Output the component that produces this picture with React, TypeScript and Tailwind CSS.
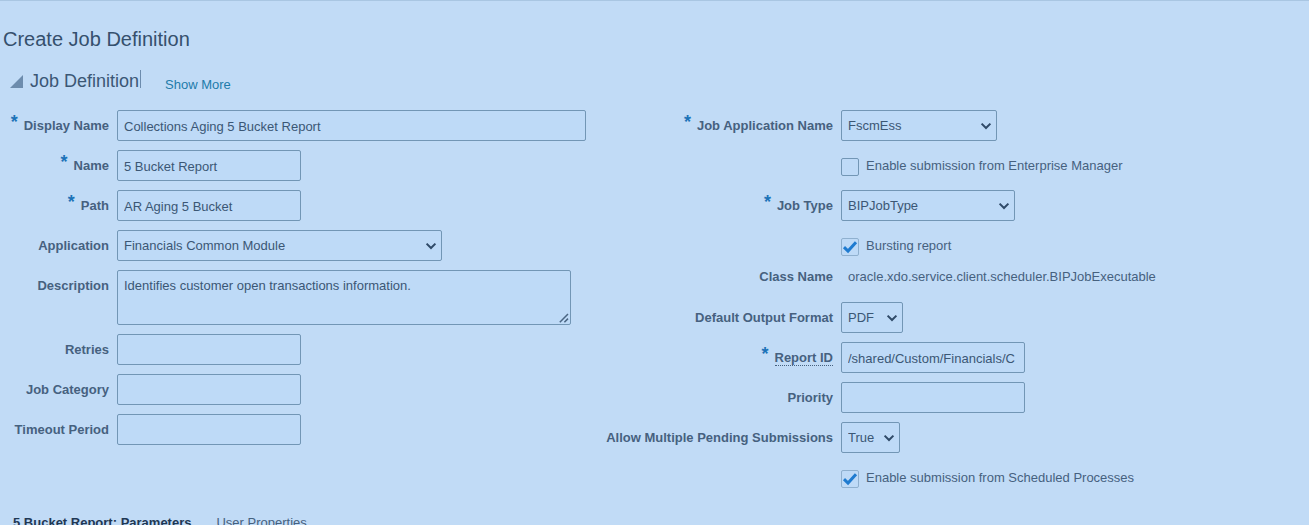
import React, { useId } from "react";

const control =
  "h-[31px] rounded-[2px] border border-[#7296b5] bg-[#bedaf7] px-[6px] text-[13px] text-[#3b5775] outline-none focus:border-[#1c73b8]";

function Label({ htmlFor, text, required, hint }: { htmlFor?: string; text: string; required?: boolean; hint?: boolean }) {
  return (
    <div className="flex h-[31px] items-center justify-end gap-[6px] whitespace-nowrap">
      {required && (
        <span aria-hidden="true" className="h-7 text-lg leading-5 font-bold text-[#1c73b8]">
          *
        </span>
      )}
      <label htmlFor={htmlFor} className="text-[13px] leading-4 font-bold text-[#46617f]">
        <span className={hint ? "border-b border-dotted border-[#46617f]" : ""}>{text}</span>
      </label>
    </div>
  );
}

type FieldProps = { label: string; value?: string; required?: boolean; hint?: boolean; width: string };

function TextField({ label, value = "", required, hint, width }: FieldProps) {
  const id = useId();
  return (
    <>
      <Label htmlFor={id} text={label} required={required} hint={hint} />
      <input id={id} type="text" defaultValue={value} required={required} className={`${control} pt-[2px] ${width}`} />
    </>
  );
}

function SelectField({ label, value = "", required, width }: FieldProps) {
  const id = useId();
  return (
    <>
      <Label htmlFor={id} text={label} required={required} />
      <div className={`relative ${width}`}>
        <select id={id} defaultValue={value} className={`${control} w-full appearance-none`}>
          <option>{value}</option>
        </select>
        <svg
          aria-hidden="true"
          viewBox="0 0 10 6"
          className="pointer-events-none absolute top-[13px] right-[6px] h-[6px] w-[10px] overflow-visible"
          fill="none"
          stroke="#2f4a68"
          strokeWidth="2"
        >
          <path d="M0.6 0.6 L5 5 L9.4 0.6" />
        </svg>
      </div>
    </>
  );
}

function CheckField({ label, checked = false }: { label: string; checked?: boolean }) {
  const id = useId();
  return (
    <div className="col-start-2 flex h-[31px] items-center gap-[7px]">
      <span className="relative mt-[2px] flex">
        <input
          id={id}
          type="checkbox"
          defaultChecked={checked}
          className="peer size-[18px] appearance-none rounded-[2px] border border-[#7296b5] bg-[#bedaf7] checked:border-[#8fb0cf]"
        />
        <svg
          aria-hidden="true"
          viewBox="0 0 18 18"
          className="pointer-events-none absolute inset-0 hidden size-[18px] peer-checked:block"
          fill="none"
          stroke="#1f7bd0"
          strokeWidth="3"
        >
          <path d="M3 9.2 L7 13 L15 4.2" />
        </svg>
      </span>
      <label htmlFor={id} className="whitespace-nowrap">
        {label}
      </label>
    </div>
  );
}

export default function App() {
  return (
    <main className="h-screen overflow-hidden border-t border-[#a9c6e2] bg-[#c1dbf6] font-['Liberation_Sans',Arial,sans-serif] text-[13px] leading-5 text-[#46617f]">
      <h1 className="px-[3px] pt-6 text-xl leading-7 text-[#35506d]">Create Job Definition</h1>

      <div className="mt-4 flex h-6 items-center pl-[10px]">
        <button type="button" aria-label="Collapse Job Definition" className="mr-[7px]">
          <svg aria-hidden="true" viewBox="0 0 13 13" className="size-[13px]" fill="#6d8cad">
            <path d="M13 0 V13 H0 Z" />
          </svg>
        </button>
        <h2 className="text-lg leading-6 text-[#3b5775]">Job Definition</h2>
        <span className="mb-1 ml-px h-[18px] w-px bg-[#6d8cad]" />
        <a href="#more" className="mt-2 ml-6 leading-4 text-[#217baa]">
          Show More
        </a>
      </div>

      <form className="mt-[17px] flex">
        <div className="grid w-[594px] shrink-0 grid-cols-[109px_1fr] content-start gap-x-2 gap-y-[9px]">
          <TextField label="Display Name" value="Collections Aging 5 Bucket Report" required width="w-[469px]" />
          <TextField label="Name" value="5 Bucket Report" required width="w-[184px]" />
          <TextField label="Path" value="AR Aging 5 Bucket" required width="w-[184px]" />
          <SelectField label="Application" value="Financials Common Module" width="w-[325px]" />
          <Label htmlFor="description" text="Description" />
          <div className="relative w-[454px]">
            <textarea
              id="description"
              defaultValue="Identifies customer open transactions information."
              className="block h-[55px] w-full resize-none rounded-[2px] border border-[#7296b5] bg-[#bedaf7] px-[6px] py-[5px] text-[13px] leading-5 text-[#3b5775] outline-none"
            />
            <svg
              aria-hidden="true"
              viewBox="0 0 10 10"
              className="pointer-events-none absolute right-[2px] bottom-[2px] size-[10px]"
              fill="none"
              stroke="#4a6583"
              strokeWidth="1.5"
            >
              <path d="M0.8 9.2 L9 1 M5.4 9.2 L9 5.6" />
            </svg>
          </div>
          <TextField label="Retries" width="w-[184px]" />
          <TextField label="Job Category" width="w-[184px]" />
          <TextField label="Timeout Period" width="w-[184px]" />
        </div>

        <div className="grid flex-1 grid-cols-[239px_1fr] content-start gap-x-2 gap-y-[9px]">
          <SelectField label="Job Application Name" value="FscmEss" required width="w-[156px]" />
          <CheckField label="Enable submission from Enterprise Manager" />
          <SelectField label="Job Type" value="BIPJobType" required width="w-[174px]" />
          <div className="col-span-2 grid grid-cols-subgrid">
            <CheckField label="Bursting report" checked />
            <Label text="Class Name" />
            <p className="flex h-8 items-center pl-[7px]">oracle.xdo.service.client.scheduler.BIPJobExecutable</p>
          </div>
          <SelectField label="Default Output Format" value="PDF" width="w-[62px]" />
          <TextField label="Report ID" value="/shared/Custom/Financials/C" required hint width="w-[184px]" />
          <TextField label="Priority" width="w-[184px]" />
          <SelectField label="Allow Multiple Pending Submissions" value="True" width="w-[59px]" />
          <CheckField label="Enable submission from Scheduled Processes" checked />
        </div>
      </form>

      <nav className="mt-5 flex gap-[25px] pl-[13px] leading-5">
        <a href="#parameters" aria-current="page" className="font-bold text-[#1f3854]">
          5 Bucket Report: Parameters
        </a>
        <a href="#properties">User Properties</a>
      </nav>
    </main>
  );
}
